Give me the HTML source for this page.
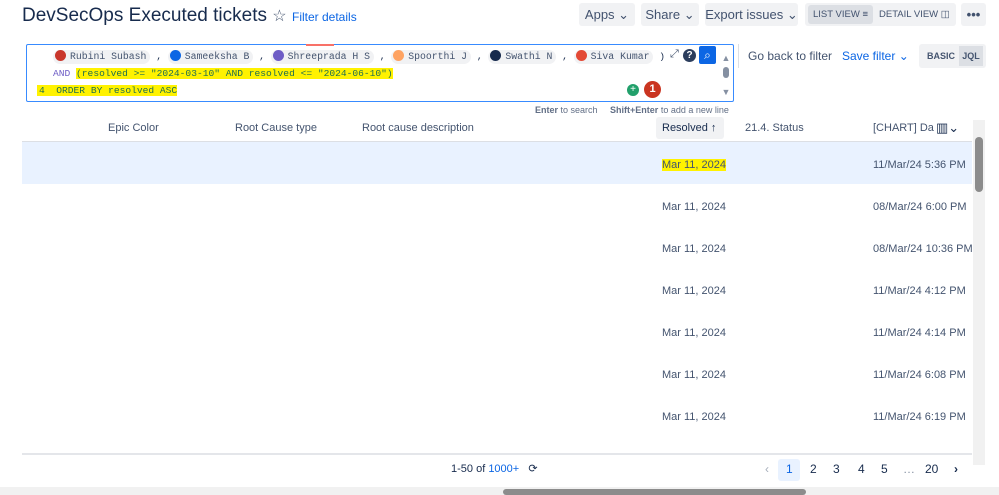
<!DOCTYPE html><html><head><style>
body{margin:0;width:999px;height:495px;overflow:hidden;background:#fff;font-family:"Liberation Sans",sans-serif;color:#172b4d;position:relative}
.a{position:absolute;white-space:nowrap}
.btn{position:absolute;top:3px;height:23px;background:#f1f2f4;border-radius:3px;font-size:13px;line-height:23px;text-align:center;color:#42526e;white-space:nowrap}
.mono{font-family:"Liberation Mono",monospace;font-size:9.6px}
.chip{display:inline-block;background:#f1f2f4;border-radius:8px;padding:0 4px 0 2px;color:#44546f;line-height:14px;font-size:9.8px}
.av{display:inline-block;width:11px;height:11px;border-radius:50%;vertical-align:-2px;margin-right:4px}
.hl{background:#fff200}
.row{position:absolute;left:22px;width:950px;height:42px;font-size:11px;color:#44546f}
.row span{position:absolute;top:17px;white-space:nowrap}
.pg{position:absolute;top:462px;font-size:12px;color:#172b4d}
</style></head><body>
<div class="a" style="left:22px;top:5px;font-size:19px;color:#172b4d">DevSecOps Executed tickets <span style="font-size:16px;color:#44546f">☆</span></div>
<div class="a" style="left:292px;top:10px;font-size:12px;color:#0c66e4">Filter details</div>
<div class="btn" style="left:579px;width:56px">Apps ⌄</div>
<div class="btn" style="left:641px;width:58px">Share ⌄</div>
<div class="btn" style="left:705px;width:93px">Export issues ⌄</div>
<div class="btn" style="left:805px;width:151px;font-size:9.5px"><span style="position:absolute;left:3px;top:2px;width:65px;height:19px;line-height:19px;background:#dcdfe4;border-radius:3px">LIST VIEW ≡</span><span style="position:absolute;left:74px">DETAIL VIEW ◫</span></div>
<div class="btn" style="left:961px;width:25px;font-weight:bold">•••</div>

<div class="a" style="left:26px;top:44px;width:706px;height:56px;border:1px solid #388bff;border-radius:2px"></div>
<div class="a" style="left:306px;top:44px;width:28px;height:2px;background:#f87168"></div>
<div class="a mono" style="left:53px;top:48px;line-height:17px;white-space:nowrap">
<div><span class="chip"><span class="av" style="background:#c9372c"></span>Rubini Subash</span> , <span class="chip"><span class="av" style="background:#0c66e4"></span>Sameeksha B</span> , <span class="chip"><span class="av" style="background:#6e5dc6"></span>Shreeprada H S</span> , <span class="chip"><span class="av" style="background:#fea362"></span>Spoorthi J</span> , <span class="chip"><span class="av" style="background:#172b4d"></span>Swathi N</span> , <span class="chip"><span class="av" style="background:#e34935"></span>Siva Kumar</span> )</div>
<div><span style="color:#6e5dc6">AND</span> <span class="hl" style="color:#216e4e">(resolved &gt;= "2024-03-10" AND resolved &lt;= "2024-06-10")</span></div>
<div><span class="hl" style="margin-left:-16px;padding-left:2px;color:#216e4e">4 &nbsp;ORDER BY resolved ASC </span></div>
</div>
<div class="a" style="left:670px;top:48px;font-size:11px;color:#44546f">⤢</div>
<div class="a" style="left:683px;top:49px;width:13px;height:13px;border-radius:50%;background:#2c3e5d;color:#fff;font-size:10px;text-align:center;line-height:13px;font-weight:bold">?</div>
<div class="a" style="left:699px;top:46px;width:17px;height:18px;background:#0c66e4;border-radius:2px;color:#fff;font-size:12px;text-align:center;line-height:18px">⌕</div>
<div class="a" style="left:720px;top:50px;font-size:9px;color:#8590a2;line-height:17px;text-align:center;width:12px">▲<br><span style="display:inline-block;width:6px;height:11px;background:#8590a2;border-radius:3px"></span><br>▼</div>
<div class="a" style="left:623px;top:81px;width:40px;height:19px;background:#fff;border-radius:8px 8px 0 0"></div>
<div class="a" style="left:627px;top:84px;width:12px;height:12px;border-radius:50%;background:#22a06b;color:#fff;font-size:10px;line-height:12px;text-align:center">+</div>
<div class="a" style="left:644px;top:81px;width:17px;height:17px;border-radius:50%;background:#ca3521;color:#fff;font-size:11px;font-weight:bold;line-height:17px;text-align:center">1</div>
<div class="a" style="left:535px;top:105px;font-size:9px;color:#626f86"><b>Enter</b> to search &nbsp;&nbsp;&nbsp; <b>Shift+Enter</b> to add a new line</div>
<div class="a" style="left:738px;top:44px;width:1px;height:24px;background:#dcdfe4"></div>
<div class="a" style="left:748px;top:49px;font-size:12px;color:#44546f">Go back to filter</div>
<div class="a" style="left:842px;top:49px;font-size:12px;color:#0c66e4">Save filter ⌄</div>
<div class="a" style="left:919px;top:44px;width:67px;height:24px;background:#f1f2f4;border-radius:3px;font-size:9px;font-weight:bold;color:#44546f;line-height:24px"><span style="margin-left:8px">BASIC</span><span style="position:absolute;left:40px;top:2px;width:24px;height:20px;line-height:20px;background:#dcdfe4;text-align:center">JQL</span></div>

<div class="a" style="left:656px;top:117px;width:68px;height:22px;background:#f1f2f4;border-radius:3px"></div>
<div class="a" style="top:122px;font-size:11px;color:#44546f;left:0;width:999px">
<span class="a" style="left:108px">Epic Color</span><span class="a" style="left:235px">Root Cause type</span><span class="a" style="left:362px">Root cause description</span><span class="a" style="left:662px;color:#172b4d">Resolved ↑</span><span class="a" style="left:745px">21.4. Status</span><span class="a" style="left:873px">[CHART] Da</span><span class="a" style="left:936px;font-size:13px;top:-2px;color:#172b4d">▥⌄</span></div>
<div class="a" style="left:22px;top:141px;width:950px;height:1px;background:#dcdfe4"></div>
<div class="row" style="top:142px;background:#e9f2ff"><span style="left:640px"><span class="hl" style="position:static">Mar 11, 2024</span></span><span style="left:851px">11/Mar/24 5:36 PM</span></div>
<div class="row" style="top:184px"><span style="left:640px">Mar 11, 2024</span><span style="left:851px">08/Mar/24 6:00 PM</span></div>
<div class="row" style="top:226px"><span style="left:640px">Mar 11, 2024</span><span style="left:851px">08/Mar/24 10:36 PM</span></div>
<div class="row" style="top:268px"><span style="left:640px">Mar 11, 2024</span><span style="left:851px">11/Mar/24 4:12 PM</span></div>
<div class="row" style="top:310px"><span style="left:640px">Mar 11, 2024</span><span style="left:851px">11/Mar/24 4:14 PM</span></div>
<div class="row" style="top:352px"><span style="left:640px">Mar 11, 2024</span><span style="left:851px">11/Mar/24 6:08 PM</span></div>
<div class="row" style="top:394px"><span style="left:640px">Mar 11, 2024</span><span style="left:851px">11/Mar/24 6:19 PM</span></div>
<div class="a" style="left:973px;top:120px;width:12px;height:345px;background:#f1f1f1"></div>
<div class="a" style="left:975px;top:137px;width:8px;height:55px;background:#8c8c8c;border-radius:4px"></div>
<div class="a" style="left:22px;top:453px;width:950px;height:2px;background:#e4e6ea"></div>
<div class="pg" style="left:451px;font-size:11px">1-50 of <span style="color:#0c66e4">1000+</span> &nbsp;&nbsp;⟳</div>
<div class="a" style="left:778px;top:459px;width:22px;height:22px;background:#e9f2ff;border-radius:3px"></div>
<div class="pg" style="left:765px;color:#a5adba">‹</div>
<div class="pg" style="left:786px;color:#0c66e4">1</div><div class="pg" style="left:810px">2</div><div class="pg" style="left:833px">3</div><div class="pg" style="left:858px">4</div><div class="pg" style="left:881px">5</div><div class="pg" style="left:903px;color:#8590a2">…</div><div class="pg" style="left:925px">20</div><div class="pg" style="left:954px;font-weight:bold">›</div>
<div class="a" style="left:0;top:487px;width:999px;height:8px;background:#f1f1f1"></div>
<div class="a" style="left:503px;top:489px;width:303px;height:6px;background:#8c8c8c;border-radius:3px"></div>
</body></html>
